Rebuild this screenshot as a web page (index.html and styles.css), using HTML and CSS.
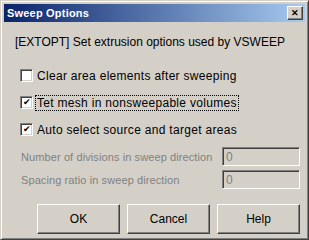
FILE: index.html
```html
<!DOCTYPE html>
<html lang="en">
<head>
    <meta charset="UTF-8">
    <title>Sweep Options</title>
    <link rel="stylesheet" href="styles.css">
</head>
<body>
    <div class="window">
        <div class="titlebar">
            <span class="title">Sweep Options</span>
            <span class="close">&#x2715;</span>
        </div>

        <div class="content">
            <p class="intro">[EXTOPT] Set extrusion options used by VSWEEP</p>

            <div class="check-row">
                <span class="box"></span>
                <span class="label">Clear area elements after sweeping</span>
            </div>
            <div class="check-row">
                <span class="box checked">&#x2714;</span>
                <span class="label focus">Tet mesh in nonsweepable volumes</span>
            </div>
            <div class="check-row">
                <span class="box checked">&#x2714;</span>
                <span class="label">Auto select source and target areas</span>
            </div>

            <div class="field-row">
                <span class="field-label">Number of divisions in sweep direction</span>
                <span class="field">0</span>
            </div>
            <div class="field-row">
                <span class="field-label">Spacing ratio in sweep direction</span>
                <span class="field">0</span>
            </div>

            <div class="buttons">
                <button class="btn">OK</button>
                <button class="btn">Cancel</button>
                <button class="btn">Help</button>
            </div>
        </div>
    </div>
</body>
</html>
```

FILE: styles.css
```css
body {
    margin: 0;
    background-color: #d4d0c8;
    font-family: "Liberation Sans", Arial, sans-serif;
    font-size: 11px;
    color: #000;
}
.window {
    width: 309px;
    height: 240px;
    box-sizing: border-box;
    border: 1px solid;
    border-color: #d4d0c8 #404040 #404040 #d4d0c8;
    box-shadow: inset 1px 1px #fff, inset -1px -1px #808080;
    padding: 3px;
    background-color: #d4d0c8;
}
.titlebar {
    height: 18px;
    display: flex;
    align-items: center;
    justify-content: space-between;
    background: linear-gradient(to right, #0a246a, #a6caf0);
    padding: 0 2px 0 3px;
}
.title {
    color: #fff;
    font-weight: bold;
    font-size: 11px;
    letter-spacing: 0.2px;
}
.close {
    width: 16px;
    height: 14px;
    box-sizing: border-box;
    background-color: #d4d0c8;
    border: 1px solid;
    border-color: #fff #404040 #404040 #fff;
    box-shadow: inset -1px -1px #808080;
    font-size: 9px;
    line-height: 12px;
    text-align: center;
    font-weight: bold;
}
.content {
    padding: 0 5px 0 11px;
}
.intro {
    margin: 13px 0 13px 0;
    font-size: 12px;
}
.check-row {
    display: flex;
    align-items: center;
    height: 27px;
    padding-left: 5px;
}
.box {
    width: 13px;
    height: 13px;
    box-sizing: border-box;
    background-color: #fff;
    border: 1px solid;
    border-color: #808080 #fff #fff #808080;
    box-shadow: inset 1px 1px #404040, inset -1px -1px #d4d0c8;
    font-size: 9px;
    line-height: 11px;
    text-align: center;
    margin-right: 3px;
}
.label {
    font-size: 12px;
    letter-spacing: 0.3px;
    padding: 0 1px;
}
.focus {
    outline: 1px dotted #000;
}
.field-row {
    display: flex;
    align-items: center;
    justify-content: space-between;
    margin-top: 4px;
    height: 19px;
    padding-left: 6px;
}
.field-label {
    color: #808080;
    font-size: 11px;
    letter-spacing: 0.1px;
    white-space: nowrap;
}
.field {
    flex-shrink: 0;
    width: 78px;
    height: 19px;
    box-sizing: border-box;
    border: 1px solid;
    border-color: #808080 #fff #fff #808080;
    box-shadow: inset 1px 1px #404040, inset -1px -1px #d4d0c8;
    color: #808080;
    font-size: 12px;
    padding: 2px 3px;
    line-height: 14px;
}
.buttons {
    display: flex;
    gap: 7px;
    margin-top: 15px;
    padding-left: 22px;
}
.btn {
    width: 83px;
    height: 30px;
    background-color: #d4d0c8;
    border: 1px solid;
    border-color: #fff #404040 #404040 #fff;
    box-shadow: inset -1px -1px #808080;
    font-family: "Liberation Sans", Arial, sans-serif;
    font-size: 12px;
    padding: 0;
}
```
